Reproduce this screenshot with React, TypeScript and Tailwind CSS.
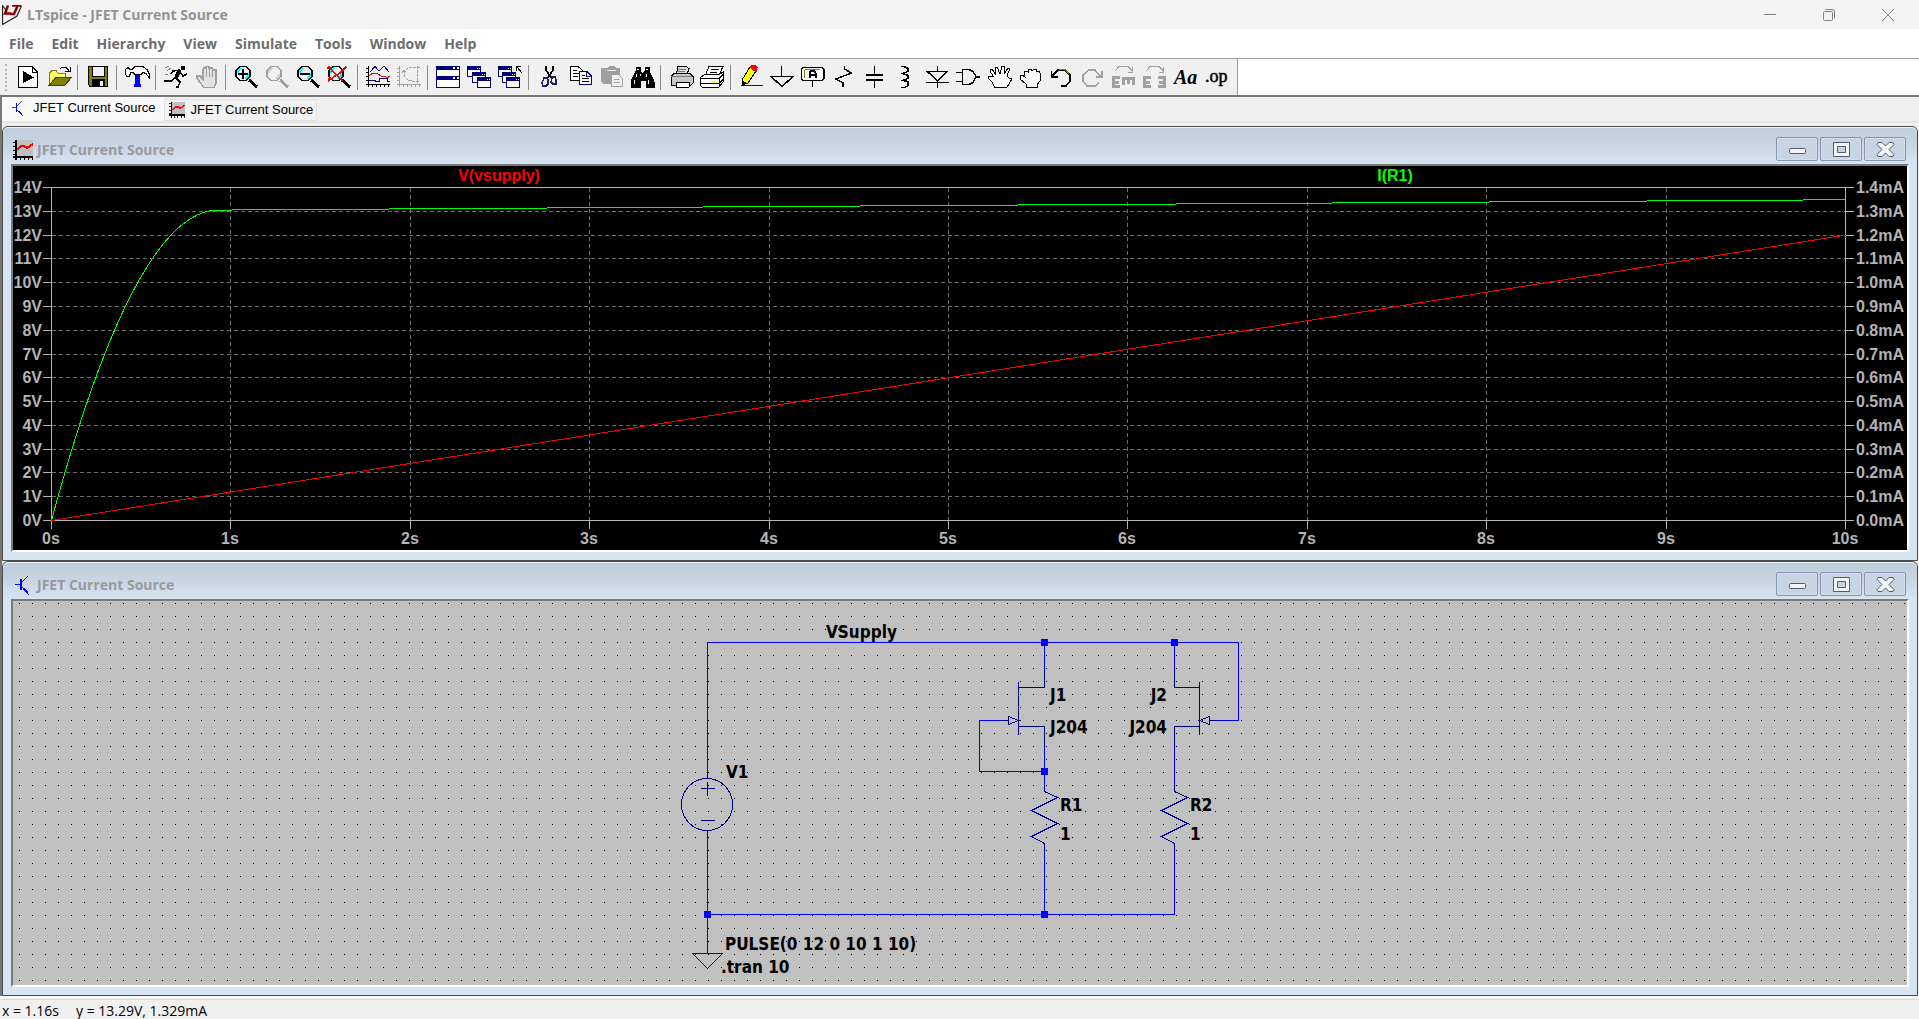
import { useState } from 'react';
import type { ReactNode } from 'react';

const menus = ['File', 'Edit', 'Hierarchy', 'View', 'Simulate', 'Tools', 'Window', 'Help'];

const GREY = '#a0a0a0';
const NAVY = '#000080';

const lens = (color: string, glass: string) => (
  <>
    <path d="M15 15L23 22" stroke={color} strokeWidth="3" />
    <path d="M6 1.500h6l4 4v6l-4 4H6l-4-4v-6z" fill="#f0f0f0" stroke={color} strokeWidth="1.500" />
    <path d="M4 8V6l3-3M14 9v2l-3 3" stroke={glass} strokeWidth="2" />
  </>
);

const miniWindow = (x: number, y: number) => (
  <>
    <rect x={x + 0.5} y={y + 0.5} width="13" height="10" fill="#fff" stroke={NAVY} />
    <rect x={x} y={y} width="14" height="4" fill={NAVY} stroke="none" />
    <path d={`M${x + 10} ${y + 2}h1M${x + 12} ${y + 2}h1`} stroke="#fff" />
  </>
);

const icons: Record<string, ReactNode> = {
  Run: (
    <>
      <path d="M2.500 1.500H16L21.500 7v15.500h-19z" fill="#fff" />
      <path d="M16.500 1.500V7h5" />
      <path d="M7 6L18 12.500 7 18z" fill="#000" stroke="none" />
    </>
  ),
  Open: (
    <>
      <path d="M2.500 20V8L5 5.500h4L11 8h7.500v5H8z" fill="#ffff60" stroke="#808000" />
      <path d="M2.500 20L9 12.500h15.500L18 20z" fill="#808000" stroke="#404000" />
      <path d="M13 4l2-2h4l3 4M23.500 2v5M23 6.500h-5" />
    </>
  ),
  Save: (
    <>
      <path d="M2.500 1.500h19v20H4l-1.500-2z" fill="#808000" />
      <rect x="6.500" y="1.500" width="12" height="10" fill="#f0f0f0" />
      <rect x="6" y="14" width="13" height="8" fill="#000" stroke="none" />
      <rect x="14" y="16" width="3" height="5" fill="#f0f0f0" stroke="none" />
    </>
  ),
  'Control Panel': (
    <>
      <path d="M10 9h5v10h1v3H9v-3h1z" fill="#0000ff" stroke="none" />
      <path d="M.5 4.500L3 2.500 5 4.500h2l3-3h8l4 3 2 4v4l-3-4-3-1-2 2h-6l-2-2H6l-2 4H1.500l-1-3z" fill="#fff" />
    </>
  ),
  Simulate: (
    <>
      <rect x="17" y="1" width="4" height="4" fill="#000" stroke="none" />
      <path d="M16 5L12 12" strokeWidth="4" />
      <path d="M16 5L9 6 7 9M17 8l2 3 4-2" strokeWidth="1.500" />
      <path d="M12 12l-5 4H0M12 13l4 4-2 5h-2" strokeWidth="1.500" />
      <path d="M1 3l4-2M3 6l4-3M1 9h3" stroke="#808080" />
    </>
  ),
  Halt: (
    <g stroke={GREY}>
      <path d="M8.500 22.500L2 13v-2h3l3 3V5l1-2h2V1.500h3V3h3l1 2h3v13l-2 4.500z" fill="#e2e2e2" strokeWidth="1.500" />
      <path d="M11.500 3v9M14.500 2v10M17.500 4v8" strokeWidth="1.500" />
    </g>
  ),
  'Zoom in': <>{lens('#000', '#00ffff')}<path d="M4 8.500h10M9 3.500v10" strokeWidth="2" /></>,
  'Zoom area': lens(GREY, '#d0d0d0'),
  'Zoom out': <>{lens('#000', '#00ffff')}<path d="M4 8.500h10" strokeWidth="2" /></>,
  'Zoom fit': (
    <>
      {lens('#000', '#00ffff')}
      <path d="M2 1l3 5 5 4 5 6M19 2l-6 6-5 3-7 5M0 3h5M1 14h5" stroke="#ff0000" strokeWidth="1.500" />
    </>
  ),
  'Plot settings': (
    <>
      <path d="M2.500 1v21M0 19.500h24M0 3.500h3M0 7.500h3M0 11.500h3M0 15.500h3M6.500 19v3M10.500 19v3M14.500 19v3M18.500 19v3M22.500 19v3" />
      <path d="M4 7L9 1.500 13 6l5-5 5 6" stroke={NAVY} />
      <path d="M3 11l4-3 5 1 3 2h4l2 2 3-2" stroke="#ff0000" />
      <path d="M3 15.500h6v1h4v-3h8v3h3" stroke={NAVY} />
    </>
  ),
  FFT: (
    <g stroke={GREY}>
      <path d="M2.500 1v21M0 19.500h24M0 3.500h3M0 7.500h3M0 11.500h3M0 15.500h3M6.500 19v3M10.500 19v3M14.500 19v3M18.500 19v3M22.500 19v3" />
      <path d="M20.500 1v17M23 3l-5-1-7 1-4 4v4l4 4 7 2 5-1M5 8l2-3 3 3" strokeDasharray="3 1" />
    </g>
  ),
  'Tile windows': (
    <>
      <rect x=".5" y="1.500" width="23" height="21" fill="#fff" stroke={NAVY} />
      <path d="M0 3h24M0 13h24" stroke={NAVY} strokeWidth="4" />
      <path d="M17 3h2M21 3h2M17 13h2M21 13h2" stroke="#fff" strokeWidth="2" />
    </>
  ),
  'Cascade windows': <>{miniWindow(0, 1)}{miniWindow(5, 7)}{miniWindow(10, 12)}</>,
  'Close all': <>{miniWindow(0, 1)}{miniWindow(4, 7)}{miniWindow(8, 12)}<path d="M24 8L19 2M18.500 6V1.500H23" /></>,
  Cut: (
    <>
      <path d="M9 1v4l6 9M16 1v4l-6 9" strokeWidth="1.500" />
      <path d="M7 13h3l1 2v4l-2 2H6l-1-3zM15 12h3l1 3v4h-3l-2-2z" stroke="#202070" strokeWidth="1.500" />
    </>
  ),
  Copy: (
    <>
      <path d="M2.500 1.500H10L14 5v10H2.500z" fill="#fff" />
      <path d="M5 5.500h4M5 8.500h6M5 11.500h5" />
      <path d="M11.500 6.500H19l4 4v8.500H11.500z" fill="#fff" stroke={NAVY} />
      <path d="M18.500 7v4h4" stroke={NAVY} />
      <path d="M14 10.500h3M14 13.500h7M14 16.500h7" />
    </>
  ),
  Paste: (
    <>
      <path d="M2 3h6l2-2h5l2 2h4v16H4l-2-2z" fill={GREY} stroke="none" />
      <path d="M8 5.500h9" stroke="#f0f0f0" />
      <path d="M12.500 9.500h7l4 4v8h-11z" fill="#f0f0f0" stroke={GREY} />
      <path d="M15 14.500h5M15 17.500h6" stroke={GREY} />
    </>
  ),
  Find: (
    <>
      <path d="M6 2h4v4l2 2h1l2-2V2h4v4l3 6 2 5v5h-8v-7h-6v7H1v-5l2-5 3-6z" fill="#000" />
      <path d="M7 4h2M16 4h2M6 9v3M4 15v4M10 9v2M16 9v3M18 15v4" stroke="#f0f0f0" />
    </>
  ),
  'Print preview': (
    <>
      <path d="M7.500 9L9 1.500h8l3 2-2 6z" fill="#ddd" />
      <path d="M2.500 11L5 8.500h16l3 3V18l-2 2H2.500z" fill="#c8c8c8" />
      <path d="M2 11.500h21M9 4h8M8 6h8" stroke="#777" />
      <path d="M7.500 17.500h13V21l-1 1.500h-12z" fill="#fff" />
    </>
  ),
  Print: (
    <>
      <path d="M5.500 10L9 1.500h14L19 10z" fill="#fff" />
      <path d="M11 4h8M10 7h7" />
      <path d="M.5 12.500l4-3h15l4-3v10l-5 6H2.500l-2-2z" fill="#fff" />
      <path d="M1 13.500h18l4-4M19 14v7M1 18.500h18l4-4" />
      <path d="M11 16.500h6" stroke="#ffff00" strokeWidth="2" />
    </>
  ),
  Wire: (
    <>
      <path d="M3 20V15L11 2l6 4L9 18z" fill="#ffff00" />
      <path d="M11 2l2-1.500h3l2 2-1 4-2-1z" fill="#ff0000" stroke="#ff0000" />
      <path d="M3 20v-4l4 2z" fill="#000" />
      <path d="M2 20.500h22" stroke="#0000ff" />
    </>
  ),
  Ground: <path d="M11.500 1v10M0 11.500h23L12 21.500 1 11.500" strokeWidth="1.500" />,
  'Net label': (
    <>
      <path d="M2 2.500h19l2 2v9l-2 2H2l-2-2v-9z" fill="#fff" strokeWidth="1.500" />
      <path d="M4 4.500h15M3.500 5v8" stroke="#808000" />
      <path d="M8.500 13V8l2-2.500h2l2 2.500v5M9 9.500h5" strokeWidth="2" />
      <path d="M11.500 16v6" strokeWidth="1.500" />
    </>
  ),
  Resistor: <path d="M12.500 1v3l7 4L4 14l7 4v4" strokeWidth="1.500" />,
  Capacitor: (
    <>
      <path d="M11.500 1v8M11.500 16v7" />
      <path d="M3 10h17M3 15h17" strokeWidth="2" />
    </>
  ),
  Inductor: <path d="M7 1.500h3l4 2v3L9 8.500l5 2v3l-5 2 5 1v4l-3 2H7" strokeWidth="1.500" />,
  Diode: <path d="M12.500 1v5M1 6.500h22M3 7l9.500 9L22 7M1 17.500h23M12.500 17v6" strokeWidth="1.500" />,
  Component: (
    <>
      <path d="M6.500 4.500H13l4 2 3 5-3 6-4 2H6.500z" fill="#f0f0f0" strokeWidth="1.500" />
      <path d="M0 7.500h6M0 16.500h6M20 12h4" strokeWidth="1.500" />
    </>
  ),
  Move: (
    <path d="M8 22.500L5 17 1 13v-2h5L3 6V4h2l4 6-1-7 2-1 3 7 2-8h2v8l4-6h2l-3 8 2 2 3 1-5 8-2 1z" fill="#fff" />
  ),
  Drag: (
    <path d="M8 22.500V19l-6-5v-3l2-1 3 2-1-6h3l1 1V4h3l1 2 2-2h2l1 3 2-1 1 2v8l-3 4v2.500z" fill="#fff" />
  ),
  Undo: (
    <>
      <path d="M3 11L9 5h7l5 5v6l-4 5h-5" strokeWidth="1.500" />
      <path d="M10 4.500h6l4 4" stroke="#808000" />
      <path d="M2.500 6v6H9" strokeWidth="1.500" />
    </>
  ),
  Redo: (
    <g stroke={GREY}>
      <path d="M20 11L15 5H9l-6 5v6l4 5h8l4-3" strokeWidth="1.500" />
      <path d="M22 6v6h-6" strokeWidth="1.500" />
    </g>
  ),
  Rotate: (
    <g stroke={GREY}>
      <path d="M4 6l4-4.500h9l4 4M21.500 2v5H17" />
      <path d="M2.500 11v12M2 12.500h7M2 17h6M2 21.500h7M11 13.500h13M12.500 14v6M17.500 14v5M22.500 14v6" strokeWidth="3" />
    </g>
  ),
  Mirror: (
    <g stroke={GREY}>
      <path d="M4 6l4-4.500h9l4 4M21.500 2v5H17" />
      <path d="M2.500 11v12M2 12.500h7M2 17h6M2 21.500h7M22.500 11v12M23 12.500h-7M23 17h-6M23 21.500h-7" strokeWidth="3" />
    </g>
  ),
  Text: (
    <text x="1" y="19" fill="#000" stroke="none" fontSize="20" fontStyle="italic" fontWeight="bold" fontFamily="Liberation Serif, serif">Aa</text>
  ),
  'SPICE directive': (
    <text x="1" y="17" fill="#000" stroke="#000" strokeWidth=".5" fontSize="18" fontFamily="Liberation Serif, serif">.op</text>
  ),
};

const toolGroups = [
  ['Run', 'Open'],
  ['Save'],
  ['Control Panel'],
  ['Simulate', 'Halt'],
  ['Zoom in', 'Zoom area', 'Zoom out', 'Zoom fit'],
  ['Plot settings', 'FFT'],
  ['Tile windows', 'Cascade windows', 'Close all'],
  ['Cut', 'Copy', 'Paste', 'Find'],
  ['Print preview', 'Print'],
  [
    'Wire', 'Ground', 'Net label', 'Resistor', 'Capacitor', 'Inductor', 'Diode', 'Component',
    'Move', 'Drag', 'Undo', 'Redo', 'Rotate', 'Mirror', 'Text', 'SPICE directive',
  ],
];

function PlotIcon({ className }: { className: string }) {
  return (
    <svg viewBox="0 0 20 20" className={className} shapeRendering="crispEdges" aria-hidden="true">
      <rect x="3" width="17" height="16" fill="#c0c0c0" />
      <path d="M3 0v20M0 16.500h20" stroke="#000" strokeWidth="2" />
      <path d="M0 2h3M0 6h3M0 10h3M0 14h3M7 16v4M11 16v4M15 16v4M19 16v4" stroke="#000" />
      <path d="M4 10l4-4h3l3 2 3-2 3-2" fill="none" stroke="#ff0000" strokeWidth="2" />
    </svg>
  );
}

function SchematicIcon({ className }: { className: string }) {
  return (
    <svg viewBox="0 0 20 20" className={className} shapeRendering="crispEdges" aria-hidden="true">
      <path d="M2 9.500h5M9 7l6-6M9 12l7 8" stroke="#0000ff" fill="none" />
      <path d="M8 4v11M11 14l4 4" stroke="#0000ff" strokeWidth="2" />
    </svg>
  );
}

const plotLeft = 38.5;
const plotRight = 1832.5;
const plotTop = 21.5;
const plotBottom = 354.5;

const timeX = (t: number) => plotLeft + ((plotRight - plotLeft) * t) / 10;
const levelY = (v: number) => plotBottom - ((plotBottom - plotTop) * v) / 14;
const snap = (n: number) => Math.floor(n) + 0.5;

// drain current in mA: triode region up to 0.93s, then nearly flat
const current = (t: number) =>
  t < 0.93 ? 1.305 * (1 - (1 - t / 0.93) ** 2) : 1.305 + 0.0048 * (t - 0.93);

const currentTrace = [...Array(40).keys()]
  .map((i) => (i * 0.93) / 40)
  .concat([0.93, 10])
  .map((t) => `${timeX(t)},${levelY(current(t) * 10)}`)
  .join(' ');

function Waveform() {
  const levels = [...Array(15).keys()];
  const times = [...Array(11).keys()];
  return (
    <svg
      viewBox="0 0 1894 384"
      className="block h-full w-full bg-black font-['Liberation_Sans',sans-serif] text-[16px] font-bold"
      role="img"
      aria-label="Waveform plot"
    >
      <g shapeRendering="crispEdges" fill="none">
        <g stroke="#6c6c6c" strokeDasharray="4 3">
          {levels.slice(1, 14).map((v) => (
            <path key={v} d={`M${plotLeft} ${snap(levelY(v))}H${plotRight}`} />
          ))}
          {times.slice(1, 10).map((t) => (
            <path key={t} d={`M${snap(timeX(t))} ${plotTop}V${plotBottom}`} />
          ))}
        </g>
        <g stroke="#b4b4b4">
          <rect x={plotLeft} y={plotTop} width={plotRight - plotLeft} height={plotBottom - plotTop} />
          {levels.map((v) => (
            <path key={v} d={`M30 ${snap(levelY(v))}h8M1833 ${snap(levelY(v))}h8`} />
          ))}
          {times.map((t) => (
            <path key={t} d={`M${snap(timeX(t))} 355v8`} />
          ))}
        </g>
        <polyline points={currentTrace} stroke="#00ff00" />
        <path d={`M${plotLeft} ${plotBottom}L${plotRight} ${levelY(12)}`} stroke="#ff0000" />
      </g>
      <g fill="#b4b4b4">
        {levels.map((v) => (
          <text key={v} x="29" y={Math.floor(levelY(v)) + 6} textAnchor="end">{v}V</text>
        ))}
        {levels.map((v) => (
          <text key={v} x="1843" y={Math.floor(levelY(v)) + 6}>{(v / 10).toFixed(1)}mA</text>
        ))}
        {times.map((t) => (
          <text key={t} x={Math.floor(timeX(t))} y="378" textAnchor="middle">{t}s</text>
        ))}
      </g>
      <text x="486" y="15" textAnchor="middle" fill="#ff0000">V(vsupply)</text>
      <text x="1382" y="15" textAnchor="middle" fill="#00ff00">I(R1)</text>
    </svg>
  );
}

const junctions = [[1031, 41], [1161, 41], [1031, 170], [694, 313], [1031, 313]];

function Schematic() {
  return (
    <svg
      viewBox="0 0 1894 384"
      className="block h-full w-full bg-[#c0c0c0] font-['DejaVu_Sans_Condensed','Open_Sans',sans-serif] text-[17px] font-bold"
      role="img"
      aria-label="Schematic"
    >
      <defs>
        <pattern id="grid" x="6" y="2" width="13" height="13" patternUnits="userSpaceOnUse">
          <rect width="1" height="1" fill="#000" />
        </pattern>
      </defs>
      <rect width="1894" height="384" fill="url(#grid)" />
      <g shapeRendering="crispEdges" fill="none" transform="translate(.5 .5)">
        <g stroke="#0000ff">
          <path d="M694 170V41H1225V119H1203M694 236V352M1031 41V68M1161 41V68" />
          <path d="M694 313H1161V248M1031 313V248M1031 144V184M1161 144V184M988 119H966V170H1031" />
          <path d="M679 352H709L694 367Z" />
        </g>
        <g stroke={NAVY}>
          <path d="M694 170V177M694 229V236M687 187H701M694 180V194M687 219H701" />
          <ellipse cx="693.500" cy="203" rx="25.500" ry="26" />
          <path d="M1031 68V86H1005M1005 80V133M1005 125H1031V144M988 119H995M995 115V123L1005 119Z" />
          <path d="M1161 68V86H1186M1186 80V133M1186 125H1161V144M1203 119H1196M1196 115V123L1186 119Z" />
          <path d="M1031 184V190L1044 196 1018 209 1044 222 1018 235 1031 242V248" />
          <path d="M1161 184V190L1174 196 1148 209 1174 222 1148 235 1161 242V248" />
        </g>
      </g>
      <g fill="#0000ff">
        {junctions.map(([x, y]) => (
          <rect key={`${x}-${y}`} x={x - 3} y={y - 3} width="7" height="7" />
        ))}
      </g>
      <text x="813" y="37">VSupply</text>
      <text x="713" y="177">V1</text>
      <text x="1037" y="100">J1</text>
      <text x="1037" y="132">J204</text>
      <text x="1154" y="100" textAnchor="end">J2</text>
      <text x="1154" y="132" textAnchor="end">J204</text>
      <text x="1047" y="210">R1</text>
      <text x="1047" y="239">1</text>
      <text x="1177" y="210">R2</text>
      <text x="1177" y="239">1</text>
      <text x="712" y="349">PULSE(0 12 0 10 1 10)</text>
      <text x="708" y="372">.tran 10</text>
    </svg>
  );
}

const captionGlyphs = [
  { label: 'Minimize', shape: <rect x="1.500" y="7.500" width="16" height="5" rx="1" /> },
  {
    label: 'Restore',
    shape: <path fillRule="evenodd" d="M1.500 1.500h16v14h-16zM5.500 5.500v6h8v-6z" />,
  },
  {
    label: 'Close',
    shape: <path d="M2 1.500h4l3.500 3.500 3.500-3.500h4l1 2-5 5 5 5-1 2h-4l-3.500-3.500L6 15.500H2l-1-2 5-5-5-5z" />,
  },
];

function ChildWindow({ icon, children }: { icon: ReactNode; children: ReactNode }) {
  return (
    <section className="flex min-h-0 flex-1 flex-col rounded-t-md border border-[#4a4a4a] bg-[#d7e4f2] px-2 pb-2">
      <header className="-mx-2 flex h-[37px] shrink-0 items-start rounded-t-md border-t border-[#eef3f8] bg-linear-to-b from-[#bfcddb] via-[#c8d5e3] to-[#d7e4f2] pt-[9px] pr-[11px] pl-[10px]">
        {icon}
        <h2 className="mt-[3px] ml-1 flex-1 font-['Open_Sans',sans-serif] text-[14px] leading-5 font-bold text-[#999]">
          JFET Current Source
        </h2>
        <div className="flex gap-0.5">
          {captionGlyphs.map((glyph) => (
            <button
              key={glyph.label}
              type="button"
              aria-label={glyph.label}
              className="flex h-6 w-[42px] items-center justify-center rounded-xs border border-[#8494b4] bg-[#c6d4e4] inset-ring inset-ring-[#d3deeb]"
            >
              <svg viewBox="0 0 19 17" className="h-[17px] w-[19px]" fill="#f4f4f4" stroke="#555b6e">
                {glyph.shape}
              </svg>
            </button>
          ))}
        </div>
      </header>
      <div className="min-h-0 flex-1 border-2 border-t-[#7a7a7a] border-r-white border-b-white border-l-[#7a7a7a]">
        {children}
      </div>
    </section>
  );
}

export default function App() {
  const [activeTab, setActiveTab] = useState(0);

  return (
    <div className="flex h-screen flex-col overflow-hidden bg-[#f0f0f0] font-['Open_Sans',sans-serif]">
      <header className="flex h-[29px] shrink-0 items-center bg-[#f3f3f3] pr-0.5 pl-0.5">
        <svg viewBox="0 0 20 20" className="h-5 w-5" aria-hidden="true">
          <path d="M.5 0V19.500L15 11 19.500 1M1 1l4 6" fill="none" stroke="#222" strokeWidth="1.200" />
          <path d="M6 .5L3 8.500h6M10 .5h9.500M15.500 1L12 9H8" fill="none" stroke="#8b0000" strokeWidth="2.500" />
        </svg>
        <h1 className="ml-[5px] flex-1 text-[14px] font-bold text-[#929292]">LTspice - JFET Current Source</h1>
        <div className="flex h-full text-[#808080]">
          <button type="button" aria-label="Minimize" className="flex w-[59px] items-center justify-center">
            <svg viewBox="0 0 12 12" className="h-3 w-3" stroke="currentColor"><path d="M0 5.500h12" /></svg>
          </button>
          <button type="button" aria-label="Restore" className="flex w-[59px] items-center justify-center">
            <svg viewBox="0 0 12 12" className="h-3 w-3" fill="none" stroke="currentColor">
              <rect x=".5" y="2.500" width="9" height="9" rx="1" />
              <path d="M2.500 .5H9a2.500 2.500 0 0 1 2.500 2.500v6.500" />
            </svg>
          </button>
          <button type="button" aria-label="Close" className="flex w-[59px] items-center justify-center">
            <svg viewBox="0 0 12 12" className="h-3 w-3" stroke="currentColor"><path d="M0 0l12 12M12 0L0 12" /></svg>
          </button>
        </div>
      </header>

      <nav className="flex h-[29px] shrink-0 items-center bg-white">
        {menus.map((menu) => (
          <button key={menu} type="button" className="px-[9px] text-[14px] leading-5 font-bold text-[#6d6d6d]">
            {menu}
          </button>
        ))}
      </nav>

      <div className="flex h-[39px] shrink-0 border-t border-b-2 border-t-[#a0a0a0] border-b-[#777] bg-white">
        <div className="flex items-center border-r border-[#a0a0a0] bg-[#f0f0f0] pr-[5px] pl-[5px]">
          <span className="mr-1.5 h-[27px] border-l-2 border-dotted border-[#b8b8b8]" />
          {toolGroups.map((group, i) => (
            <div key={i} className="flex items-center">
              {i > 0 && <span className="mr-[5px] ml-0.5 h-[25px] w-px bg-[#8c8c8c]" />}
              {group.map((tool) => (
                <button key={tool} type="button" aria-label={tool} className="flex w-[31px] justify-center">
                  <svg viewBox="0 0 25 24" className="h-6 w-[25px]" fill="none" stroke="#000" shapeRendering="crispEdges">
                    {icons[tool]}
                  </svg>
                </button>
              ))}
            </div>
          ))}
        </div>
      </div>

      <div className="flex min-h-0 flex-1 flex-col border-l-2 border-[#777] pr-px">
        <div role="tablist" className="mb-[3px] flex h-[26px] shrink-0 items-start border-b-2 border-[#e4e4e4] font-['Liberation_Sans',sans-serif] text-[13px] text-black">
          <button
            type="button"
            role="tab"
            aria-selected={activeTab === 0}
            onClick={() => setActiveTab(0)}
            className="flex h-6 items-center gap-[7px] bg-[#f9f9f9] pr-2 pb-0.5 pl-2"
          >
            <SchematicIcon className="h-4 w-4" />
            <span className="leading-4">JFET Current Source</span>
          </button>
          <button
            type="button"
            role="tab"
            aria-selected={activeTab === 1}
            onClick={() => setActiveTab(1)}
            className="mt-0.5 flex h-[22px] items-center gap-1.5 border border-[#e2e2e2] bg-[#f2f2f2] pr-[3px] pl-1"
          >
            <PlotIcon className="h-4 w-4" />
            <span className="leading-4">JFET Current Source</span>
          </button>
        </div>

        <main className="flex min-h-0 flex-1 flex-col bg-[#e8e8e0]">
          <ChildWindow icon={<PlotIcon className="mt-[3px] h-5 w-5" />}>
            <Waveform />
          </ChildWindow>
          <ChildWindow icon={<SchematicIcon className="mt-[3px] h-5 w-5" />}>
            <Schematic />
          </ChildWindow>
        </main>
      </div>

      <footer className="flex h-[23px] shrink-0 items-end border-t-2 border-[#f8f8f8] px-0.5 text-[14px] text-black">
        <p className="flex h-5 w-full items-center gap-[17px] border-t border-[#dcd4dc] pt-0.5">
          <span>x = 1.16s</span>
          <span>y = 13.29V, 1.329mA</span>
        </p>
      </footer>
    </div>
  );
}
